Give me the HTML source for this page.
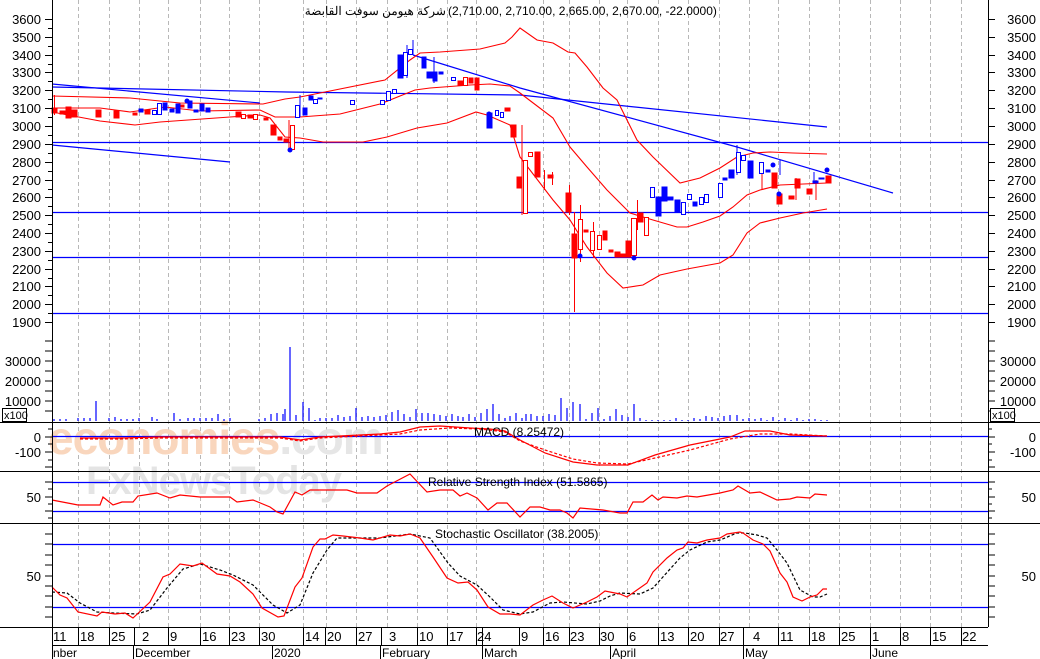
<!DOCTYPE html>
<html><head><meta charset="utf-8"><style>
html,body{margin:0;padding:0;background:#fff;}
svg{display:block;font-family:"Liberation Sans","Noto Sans CJK SC",sans-serif;}
.ax{font-size:13px;fill:#000;}
</style></head><body>
<svg width="1040" height="659" viewBox="0 0 1040 659" xmlns="http://www.w3.org/2000/svg">
<rect width="1040" height="659" fill="#fff"/>
<g stroke="#b8b8b8" stroke-width="1" stroke-dasharray="4,3">
<path d="M78.5 0V627M109.5 0V627M139.5 0V627M168.5 0V627M200.5 0V627M229.5 0V627M259.5 0V627M303.5 0V627M326.5 0V627M356.5 0V627M387.5 0V627M417.5 0V627M447.5 0V627M476.5 0V627M543.5 0V627M569.5 0V627M599.5 0V627M627.5 0V627M658.5 0V627M688.5 0V627M719.5 0V627M749.5 0V627M778.5 0V627M809.5 0V627M839.5 0V627M870.5 0V627M900.5 0V627M930.5 0V627M961.5 0V627"/>
</g>
<text x="48" y="454" font-size="46" font-weight="bold" fill="#f9d6bd" letter-spacing="-1">economies<tspan fill="#e6e6e6">.com</tspan></text>
<text x="86" y="494" font-size="40" font-weight="bold" fill="#e4e4e4" letter-spacing="-1">FxNewsToday</text>
<text x="446" y="15" font-size="12" fill="#000" text-anchor="end" direction="ltr">شركة هيومن سوفت القابضة</text>
<text x="448" y="15" font-size="12" fill="#000">(2,710.00, 2,710.00, 2,665.00, 2,670.00, -22.0000)</text>
<g stroke="#0000ff" stroke-width="1.3">
<path d="M52 142.5H988M52 212.5H988M52 257.5H988M52 313.5H988"/>
</g>
<g fill="none" stroke="#0000ff" stroke-width="1.2">
<path d="M52 84L260 103"/>
<path d="M52 87L287 92L520 95L827 127"/>
<path d="M413 55L520 88L737 147L893 193"/>
<path d="M52 145L230 162"/>
</g>
<g fill="none" stroke="#ff0000" stroke-width="1.1">
<polyline points="52,96 130,98 180,103 263,104 285,99 300,97 330,91 385,80 410,60 420,53 440,52 480,49 505,43 512,37 520,28 537,40 553,43 568,52 575,53 587,67 603,88 617,100 627,120 637,140 653,157 680,183 700,178 720,168 737,157 753,153 770,152 793,153 827,154"/>
<polyline points="52,108 100,108 130,112 165,107 200,111 260,110 275,117 300,117 340,114 380,104 400,96 415,90 430,88 470,85 490,84 510,86 520,93 553,118 570,147 587,167 607,190 630,213 653,220 677,227 687,227 703,222 720,216 733,207 747,195 760,190 780,185 827,183"/>
<polyline points="52,112 100,121 135,125 160,122 230,117 260,115 270,118 285,137 300,138 323,142 363,142 387,137 417,128 447,123 476,112 487,115 510,125 520,157 553,200 570,220 587,247 607,273 623,288 643,285 660,275 687,269 720,263 733,255 747,233 760,223 780,218 803,213 827,209"/>
</g>
<g stroke-width="1">
<g fill="#ff0000" stroke="#ff0000">
<path d="M54.5 95V115M574.5 212V312M580.5 205V262M593.5 222V258M637.5 200V230M544.5 170V190M552.5 172V185M569.5 185V215M289 120V150M762 170V190M796 178V200M816 180V200M522 125V215"/>
<rect x="52" y="108" width="5" height="5"/><rect x="60" y="111" width="5" height="3"/><rect x="66" y="107" width="5" height="11"/><rect x="72" y="110" width="5" height="7"/>
<rect x="96" y="110" width="5" height="7"/><rect x="114" y="111" width="5" height="7"/><rect x="133" y="113" width="4" height="2"/><rect x="145" y="110" width="5" height="4"/>
<rect x="180" y="105" width="4" height="2"/><rect x="236" y="112" width="5" height="5"/><rect x="248" y="115" width="5" height="3"/><rect x="264" y="118" width="4" height="2"/>
<rect x="271" y="125" width="5" height="10"/><rect x="278" y="137" width="4" height="3"/><rect x="284" y="139" width="4" height="3"/>
<rect x="458" y="81" width="5" height="4"/><rect x="469" y="78" width="4" height="5"/><rect x="475" y="78" width="4" height="12"/>
<rect x="505" y="108" width="5" height="3"/><rect x="511" y="125" width="5" height="12"/><rect x="517" y="177" width="5" height="11"/>
<rect x="535" y="152" width="5" height="25"/><rect x="548" y="175" width="5" height="3"/><rect x="566" y="193" width="5" height="19"/>
<rect x="572" y="234" width="5" height="24"/><rect x="584" y="230" width="4" height="2"/><rect x="603" y="231" width="4" height="9"/>
<rect x="609" y="250" width="4" height="2"/><rect x="615" y="252" width="5" height="5"/><rect x="621" y="254" width="5" height="3"/><rect x="626" y="241" width="5" height="16"/><rect x="638" y="213" width="5" height="9"/>
<rect x="772" y="173" width="5" height="15"/><rect x="777" y="194" width="5" height="10"/><rect x="789" y="196" width="5" height="3"/><rect x="795" y="179" width="5" height="9"/><rect x="807" y="189" width="5" height="5"/><rect x="826" y="176" width="5" height="7"/>
</g>
<g fill="#fff" stroke="#ff0000">
<rect x="290.5" y="125.5" width="4" height="24"/><rect x="241.5" y="114.5" width="4" height="4"/><rect x="253.5" y="114.5" width="4" height="5"/><rect x="463.5" y="77.5" width="4" height="8"/>
<rect x="523.5" y="160.5" width="4" height="53"/><rect x="528.5" y="152.5" width="4" height="4"/><rect x="578.5" y="219.5" width="4" height="30"/><rect x="590.5" y="231.5" width="4" height="19"/><rect x="597.5" y="235.5" width="4" height="14"/><rect x="631.5" y="218.5" width="5" height="37"/><rect x="644.5" y="217.5" width="4" height="18"/>
</g>
<g fill="#0000ff" stroke="#0000ff">
<path d="M407 45V78M413 40V55M434 57V83M737 145V175M300 95V117M780 160V175M814 172V183"/>
<rect x="139" y="109" width="4" height="3"/><rect x="163" y="103" width="4" height="7"/><rect x="170" y="109" width="4" height="3"/><rect x="176" y="104" width="4" height="9"/><rect x="188" y="101" width="4" height="7"/><rect x="194" y="110" width="4" height="2"/><rect x="200" y="104" width="4" height="7"/><rect x="206" y="108" width="4" height="4"/>
<rect x="303" y="108" width="4" height="7"/><rect x="309" y="96" width="4" height="4"/><rect x="318" y="98" width="4" height="1"/>
<rect x="398" y="55" width="5" height="23"/><rect x="422" y="57" width="4" height="11"/><rect x="427" y="72" width="5" height="6"/><rect x="433" y="72" width="4" height="9"/><rect x="439" y="72" width="4" height="2"/>
<rect x="487" y="113" width="5" height="15"/>
<rect x="656" y="197" width="5" height="19"/><rect x="662" y="187" width="5" height="14"/><rect x="668" y="197" width="5" height="3"/><rect x="675" y="200" width="5" height="12"/><rect x="693" y="202" width="4" height="4"/>
<rect x="723" y="178" width="4" height="2"/><rect x="729" y="170" width="5" height="8"/><rect x="748" y="161" width="5" height="17"/><rect x="766" y="170" width="4" height="2"/><rect x="813" y="181" width="5" height="2"/><rect x="819" y="178" width="5" height="1"/>
</g>
<g fill="#fff" stroke="#0000ff">
<rect x="152.5" y="110.5" width="4" height="4"/><rect x="157.5" y="103.5" width="4" height="11"/><rect x="295.5" y="105.5" width="4" height="12"/><rect x="313.5" y="99.5" width="4" height="4"/><rect x="350.5" y="100.5" width="4" height="4"/><rect x="380.5" y="100.5" width="4" height="4"/><rect x="386.5" y="91.5" width="4" height="9"/><rect x="392.5" y="89.5" width="4" height="4"/>
<rect x="403.5" y="52.5" width="4" height="23"/><rect x="408.5" y="49.5" width="4" height="5"/><rect x="451.5" y="77.5" width="4" height="3"/><rect x="495.5" y="110.5" width="3" height="5"/><rect x="500.5" y="112.5" width="3" height="5"/>
<rect x="650.5" y="187.5" width="4" height="10"/><rect x="681.5" y="202.5" width="4" height="12"/><rect x="687.5" y="194.5" width="4" height="5"/><rect x="699.5" y="197.5" width="4" height="7"/><rect x="704.5" y="194.5" width="4" height="8"/><rect x="718.5" y="183.5" width="4" height="14"/><rect x="736.5" y="152.5" width="4" height="20"/><rect x="741.5" y="155.5" width="4" height="5"/><rect x="759.5" y="162.5" width="4" height="11"/>
</g>
<g fill="#0000ff"><circle cx="290" cy="150" r="2.5"/><circle cx="187" cy="101" r="2.5"/><circle cx="489" cy="114" r="2.5"/><circle cx="580" cy="256" r="2.5"/><circle cx="634" cy="258" r="2.5"/><circle cx="773" cy="165" r="2.5"/><circle cx="779" cy="194" r="2.5"/><circle cx="827" cy="170" r="2.5"/></g>
</g>
<g stroke="#0000ff" stroke-width="1.2">
<path d="M54 421V419M60 421V419M66 421V419M78 421V418M84 421V418M90 421V418M96 421V401M109 421V418M115 421V417M121 421V419M127 421V419M133 421V419M139 421V418M152 421V417M157 421V419M174 421V413M180 421V419M188 421V418M194 421V418M200 421V418M206 421V418M212 421V418M218 421V414M224 421V419M230 421V418M259 421V419M265 421V418M271 421V414M277 421V413M283 421V414M285 421V409M290 421V347M296 421V415M303 421V402M309 421V408M315 421V420M320 421V418M326 421V418M332 421V418M338 421V415M344 421V417M350 421V416M356 421V408M362 421V417M368 421V416M374 421V417M380 421V416M386 421V415M392 421V412M398 421V410M404 421V414M410 421V417M416 421V409M422 421V413M428 421V413M434 421V414M440 421V415M446 421V416M452 421V414M458 421V416M463 421V417M469 421V414M475 421V417M481 421V413M487 421V409M493 421V404M499 421V414M505 421V418M510 421V416M516 421V413M522 421V418M526 421V414M531 421V414M537 421V416M543 421V416M549 421V414M555 421V415M561 421V398M567 421V408M573 421V402M580 421V404M586 421V419M592 421V413M598 421V408M604 421V419M610 421V416M616 421V409M622 421V415M628 421V417M634 421V404M640 421V418M646 421V420M652 421V420M658 421V420M664 421V420M670 421V420M676 421V418M682 421V420M688 421V420M694 421V418M700 421V419M706 421V416M712 421V417M718 421V418M724 421V416M730 421V415M737 421V415M743 421V419M749 421V418M755 421V419M761 421V418M767 421V420M773 421V417M779 421V420M785 421V418M791 421V420M797 421V418M803 421V420M809 421V419M815 421V419M821 421V420M827 421V420"/>
</g>
<g fill="none" stroke-width="1.2">
<path d="M52 436.5H988" stroke="#0000ff"/>
<polyline stroke="#ff0000" points="80,438 120,438 160,437 200,437 240,437 280,437 300,440 320,437 340,436 360,435 380,434 400,432 420,427 440,426 470,428 490,429 505,431 520,440 545,453 573,462 597,465 628,465 655,455 690,445 730,437 745,431 770,431 790,435 827,436"/>
<polyline stroke="#ff0000" stroke-dasharray="3,2" points="80,439 120,439 160,438 200,438 240,438 280,438 300,441 320,438 340,437 380,435 400,434 420,430 450,428 480,429 505,432 520,441 545,450 573,459 597,463 628,464 655,458 690,450 730,439 760,434 790,434 827,436"/>
</g>
<text x="474" y="436" font-size="12" fill="#000">MACD (8.25472)</text>
<g fill="none" stroke-width="1.2">
<path d="M52 482.5H988M52 511.5H988" stroke="#0000ff"/>
<polyline stroke="#ff0000" points="52,500 78,505 100,505 103,497 113,505 122,502 133,502 138,496 157,493 170,498 180,495 200,497 230,497 237,502 253,500 270,507 277,512 283,514 295,492 302,495 310,490 333,490 347,490 357,493 377,493 387,486 410,474 427,492 440,490 453,490 460,496 467,493 477,498 488,510 497,503 507,503 520,517 530,507 540,507 550,510 560,510 567,513 573,518 580,508 603,510 620,513 627,513 633,502 643,502 652,495 658,500 663,497 677,498 687,496 697,497 720,493 733,490 738,486 750,493 760,492 777,500 790,499 797,497 810,498 815,494 827,495"/>
</g>
<text x="428" y="486" font-size="12" fill="#000">Relative Strength Index (51.5865)</text>
<g fill="none" stroke-width="1.2">
<path d="M52 544.5H988M52 607.5H988" stroke="#0000ff"/>
<polyline stroke="#000" stroke-dasharray="3,2" points="52,592 67,593 80,603 97,612 113,613 137,614 150,610 167,588 183,569 200,564 220,570 233,575 253,585 273,605 287,613 300,605 313,573 327,550 337,538 380,538 410,534 430,538 448,563 460,576 477,585 490,597 503,610 520,614 533,612 550,603 563,602 587,604 600,601 610,596 620,593 640,594 653,588 680,558 690,550 707,542 720,540 737,533 745,533 757,535 767,538 777,550 787,563 800,590 813,597 820,597 827,594"/>
<polyline stroke="#ff0000" points="52,587 60,595 67,598 78,612 97,616 102,612 115,614 125,613 133,618 150,602 163,577 170,574 180,564 193,566 202,563 217,574 230,576 240,582 253,594 262,608 278,617 284,616 295,587 302,578 313,547 320,539 325,539 333,535 343,536 360,538 373,540 390,535 400,536 410,534 420,538 433,557 447,578 458,583 468,582 477,590 488,607 500,614 510,614 520,615 533,605 543,600 552,596 563,603 573,608 587,602 597,597 605,591 620,594 627,597 647,583 653,572 667,558 677,550 683,548 688,542 697,543 707,540 720,538 727,534 740,532 743,533 753,540 763,544 770,551 780,573 787,582 793,597 802,601 810,597 817,595 823,589 827,589"/>
</g>
<text x="435" y="538" font-size="12" fill="#000">Stochastic Oscillator (38.2005)</text>
<g stroke="#000" stroke-width="1">
<path d="M0 422.5H1040M0 471.5H1040M0 523.5H1040M0 627.5H988M52 645.5H988"/>
<path d="M52.5 0V659M988.5 0V627"/>
</g>
<g stroke="#000" stroke-width="1">
<path d="M45 19.5H52M45 37.5H52M45 55.5H52M45 72.5H52M45 90.5H52M45 108.5H52M45 126.5H52M45 144.5H52M45 162.5H52M45 180.5H52M45 197.5H52M45 215.5H52M45 233.5H52M45 251.5H52M45 269.5H52M45 286.5H52M45 304.5H52M45 322.5H52"/>
<path d="M48 28.5H52M48 46.5H52M48 64.5H52M48 81.5H52M48 99.5H52M48 117.5H52M48 135.5H52M48 153.5H52M48 171.5H52M48 189.5H52M48 206.5H52M48 224.5H52M48 242.5H52M48 260.5H52M48 278.5H52M48 295.5H52M48 313.5H52"/>
<path d="M988 19.5H995M988 37.5H995M988 55.5H995M988 72.5H995M988 90.5H995M988 108.5H995M988 126.5H995M988 144.5H995M988 162.5H995M988 180.5H995M988 197.5H995M988 215.5H995M988 233.5H995M988 251.5H995M988 269.5H995M988 286.5H995M988 304.5H995M988 322.5H995"/>
<path d="M45 341H52M45 351H52M45 361H52M45 371H52M45 381H52M45 391H52M45 401H52M45 411H52M988 341H995M988 351H995M988 361H995M988 371H995M988 381H995M988 391H995M988 401H995M988 411H995"/>
<path d="M45 437H52M45 452H52M45 467H52M48 429H52M48 444H52M48 460H52M988 437H995M988 452H995M988 467H995M988 429H992M988 444H992M988 460H992"/>
<path d="M45 482H52M45 497H52M45 511H52M48 489H52M48 504H52M48 518H52M988 482H995M988 497H995M988 511H995M988 489H992M988 504H992M988 518H992"/>
<path d="M45 534H52M45 544H52M45 555H52M45 565H52M45 576H52M45 586H52M45 596H52M45 607H52M45 617H52M988 534H995M988 544H995M988 555H995M988 565H995M988 576H995M988 586H995M988 596H995M988 607H995M988 617H995"/>
</g>
<g class="ax" text-anchor="end">
<text x="41" y="24">3600</text><text x="41" y="42">3500</text><text x="41" y="60">3400</text><text x="41" y="77">3300</text><text x="41" y="95">3200</text><text x="41" y="113">3100</text><text x="41" y="131">3000</text><text x="41" y="149">2900</text><text x="41" y="167">2800</text><text x="41" y="185">2700</text><text x="41" y="202">2600</text><text x="41" y="220">2500</text><text x="41" y="238">2400</text><text x="41" y="256">2300</text><text x="41" y="274">2200</text><text x="41" y="291">2100</text><text x="41" y="309">2000</text><text x="41" y="327">1900</text>
<text x="41" y="366">30000</text><text x="41" y="386">20000</text><text x="41" y="406">10000</text>
<text x="41" y="442">0</text><text x="41" y="457">-100</text><text x="41" y="502">50</text><text x="41" y="581">50</text>
</g>
<g class="ax" text-anchor="end">
<text x="1036" y="24">3600</text><text x="1036" y="42">3500</text><text x="1036" y="60">3400</text><text x="1036" y="77">3300</text><text x="1036" y="95">3200</text><text x="1036" y="113">3100</text><text x="1036" y="131">3000</text><text x="1036" y="149">2900</text><text x="1036" y="167">2800</text><text x="1036" y="185">2700</text><text x="1036" y="202">2600</text><text x="1036" y="220">2500</text><text x="1036" y="238">2400</text><text x="1036" y="256">2300</text><text x="1036" y="274">2200</text><text x="1036" y="291">2100</text><text x="1036" y="309">2000</text><text x="1036" y="327">1900</text>
<text x="1036" y="366">30000</text><text x="1036" y="386">20000</text><text x="1036" y="406">10000</text>
<text x="1036" y="442">0</text><text x="1036" y="457">-100</text><text x="1036" y="502">50</text><text x="1036" y="581">50</text>
</g>
<rect x="2.5" y="408.5" width="24" height="13" fill="#fff" stroke="#000"/>
<text x="4" y="419" font-size="11">x100</text>
<rect x="990.5" y="408.5" width="24" height="13" fill="#fff" stroke="#000"/>
<text x="992" y="419" font-size="11">x100</text>
<g stroke="#000" stroke-width="1">
<path d="M78.5 627V645M109.5 627V645M134.5 627V645M168.5 627V645M200.5 627V645M229.5 627V645M259.5 627V645M303.5 627V645M325.5 627V645M356.5 627V645M381.5 627V645M417.5 627V645M447.5 627V645M476.5 627V645M482.5 627V645M519.5 627V645M543.5 627V645M569.5 627V645M599.5 627V645M627.5 627V645M658.5 627V645M688.5 627V645M719.5 627V645M743.5 627V645M778.5 627V645M809.5 627V645M839.5 627V645M870.5 627V645M900.5 627V645M930.5 627V645M961.5 627V645"/>
<path d="M133.5 645V659M272.5 645V659M380.5 645V659M482.5 645V659M610.5 645V659M743.5 645V659M870.5 645V659"/>
</g>
<g class="ax">
<text x="53" y="641">11</text><text x="80" y="641">18</text><text x="111" y="641">25</text><text x="142" y="641">2</text><text x="170" y="641">9</text><text x="202" y="641">16</text><text x="231" y="641">23</text><text x="261" y="641">30</text><text x="305" y="641">14</text><text x="327" y="641">20</text><text x="358" y="641">27</text><text x="389" y="641">3</text><text x="419" y="641">10</text><text x="449" y="641">17</text><text x="477" y="641">24</text><text x="521" y="641">9</text><text x="545" y="641">16</text><text x="570" y="641">23</text><text x="600" y="641">30</text><text x="629" y="641">6</text><text x="660" y="641">13</text><text x="690" y="641">20</text><text x="720" y="641">27</text><text x="753" y="641">4</text><text x="780" y="641">11</text><text x="811" y="641">18</text><text x="841" y="641">25</text><text x="872" y="641">1</text><text x="902" y="641">8</text><text x="932" y="641">15</text><text x="962" y="641">22</text>
<text x="53" y="657" font-size="12">nber</text><text x="135" y="657" font-size="12">December</text><text x="274" y="657" font-size="12">2020</text><text x="382" y="657" font-size="12">February</text><text x="484" y="657" font-size="12">March</text><text x="612" y="657" font-size="12">April</text><text x="745" y="657" font-size="12">May</text><text x="872" y="657" font-size="12">June</text>
</g>
</svg>
</body></html>
